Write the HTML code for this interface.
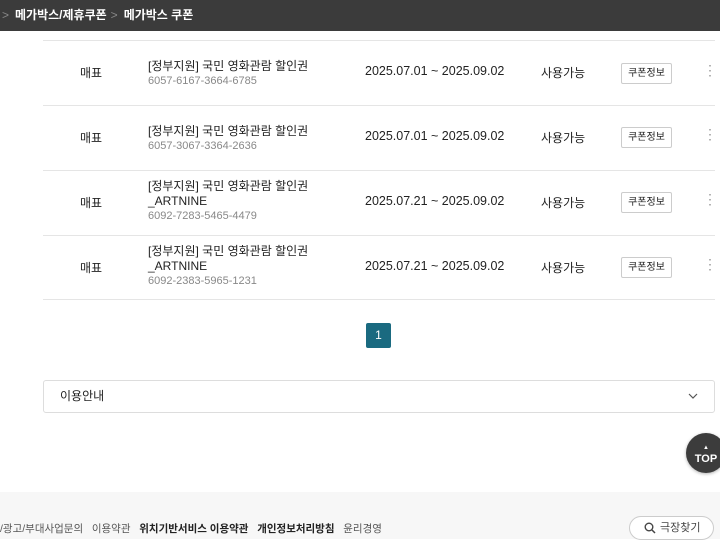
<!DOCTYPE html><html><head><meta charset="utf-8"><style>
body{margin:0;width:720px;height:539px;overflow:hidden;background:#fff;font-family:"Liberation Sans","Noto Sans CJK KR",sans-serif;color:#222;position:relative}
.hd{position:absolute;left:0;top:0;width:720px;height:31px;background:#3b3b3b;color:#fff;font-size:12px;font-weight:bold;line-height:31px}
.hd span.g{color:#888;font-weight:normal;margin:0 6px 0 4px}
.row{position:absolute;left:43px;width:672px;height:64px;border-top:1px solid #e5e5e5}
.t{position:absolute;font-size:12px}
.btn{position:absolute;left:578px;width:51px;height:21px;border:1px solid #ccc;border-radius:2px;font-size:10px;text-align:center;line-height:19px;box-sizing:border-box;background:#fff}
.dot{position:absolute;left:662px;color:#999;font-size:14px}
.c{color:#888;font-size:11px}
</style></head><body>
<div class="hd"><span class="g" style="margin-left:2px">&gt;</span>메가박스/제휴쿠폰<span class="g">&gt;</span>메가박스 쿠폰</div>

<div class="row" style="top:40px"></div>
<div class="row" style="top:105px"></div>
<div class="row" style="top:170px"></div>
<div class="row" style="top:235px"></div>
<div class="row" style="top:299px;height:0"></div>

<div class="t" style="left:80px;top:64px">매표</div>
<div class="t" style="left:148px;top:57px">[정부지원] 국민 영화관람 할인권<div class="c" style="margin-top:1px">6057-6167-3664-6785</div></div>
<div class="t" style="left:365px;top:64px;font-size:12.5px">2025.07.01 ~ 2025.09.02</div>
<div class="t" style="left:541px;top:64px">사용가능</div>
<div class="btn" style="left:621px;top:63px">쿠폰정보</div>
<div class="dot" style="left:703px;top:62px">⋮</div>

<div class="t" style="left:80px;top:129px">매표</div>
<div class="t" style="left:148px;top:122px">[정부지원] 국민 영화관람 할인권<div class="c" style="margin-top:1px">6057-3067-3364-2636</div></div>
<div class="t" style="left:365px;top:129px;font-size:12.5px">2025.07.01 ~ 2025.09.02</div>
<div class="t" style="left:541px;top:129px">사용가능</div>
<div class="btn" style="left:621px;top:127px">쿠폰정보</div>
<div class="dot" style="left:703px;top:126px">⋮</div>

<div class="t" style="left:80px;top:194px">매표</div>
<div class="t" style="left:148px;top:179px;line-height:15px">[정부지원] 국민 영화관람 할인권<br>_ARTNINE<div class="c">6092-7283-5465-4479</div></div>
<div class="t" style="left:365px;top:194px;font-size:12.5px">2025.07.21 ~ 2025.09.02</div>
<div class="t" style="left:541px;top:194px">사용가능</div>
<div class="btn" style="left:621px;top:192px">쿠폰정보</div>
<div class="dot" style="left:703px;top:191px">⋮</div>

<div class="t" style="left:80px;top:259px">매표</div>
<div class="t" style="left:148px;top:244px;line-height:15px">[정부지원] 국민 영화관람 할인권<br>_ARTNINE<div class="c">6092-2383-5965-1231</div></div>
<div class="t" style="left:365px;top:259px;font-size:12.5px">2025.07.21 ~ 2025.09.02</div>
<div class="t" style="left:541px;top:259px">사용가능</div>
<div class="btn" style="left:621px;top:257px">쿠폰정보</div>
<div class="dot" style="left:703px;top:256px">⋮</div>

<div style="position:absolute;left:366px;top:323px;width:25px;height:25px;background:#1a6a80;color:#fff;font-size:12px;text-align:center;line-height:25px;border-radius:2px">1</div>

<div style="position:absolute;left:43px;top:380px;width:672px;height:33px;border:1px solid #ddd;box-sizing:border-box;border-radius:3px;font-size:12px;line-height:31px;padding-left:16px">이용안내
<svg style="position:absolute;right:16px;top:12px" width="10" height="7"><path d="M1 1l4 4 4-4" fill="none" stroke="#555" stroke-width="1.2"/></svg></div>

<div style="position:absolute;left:686px;top:433px;width:40px;height:40px;border-radius:50%;background:#3c3c3c;color:#fff;font-size:11px;font-weight:bold;text-align:center;box-sizing:border-box;padding-top:8px;line-height:11px;box-shadow:0 1px 3px rgba(0,0,0,.3)"><span style="font-size:6px">▲</span><br>TOP</div>

<div style="position:absolute;left:0;top:492px;width:720px;height:47px;background:#f7f7f7"></div>
<div style="position:absolute;left:0;top:521px;font-size:10.5px;color:#555;white-space:nowrap">/광고/부대사업문의 &nbsp; 이용약관 &nbsp; <b style="color:#222">위치기반서비스 이용약관</b> &nbsp; <b style="color:#222">개인정보처리방침</b> &nbsp; 윤리경영</div>
<div style="position:absolute;left:629px;top:516px;width:85px;height:24px;border:1px solid #ccc;border-radius:12px;background:#fff;box-sizing:border-box;font-size:11px;color:#444;line-height:22px;padding-left:30px">극장찾기
<svg style="position:absolute;left:14px;top:5px" width="12" height="12"><circle cx="5" cy="5" r="3.8" fill="none" stroke="#444" stroke-width="1.4"/><path d="M8 8l3 3" stroke="#444" stroke-width="1.5"/></svg></div>
</body></html>
